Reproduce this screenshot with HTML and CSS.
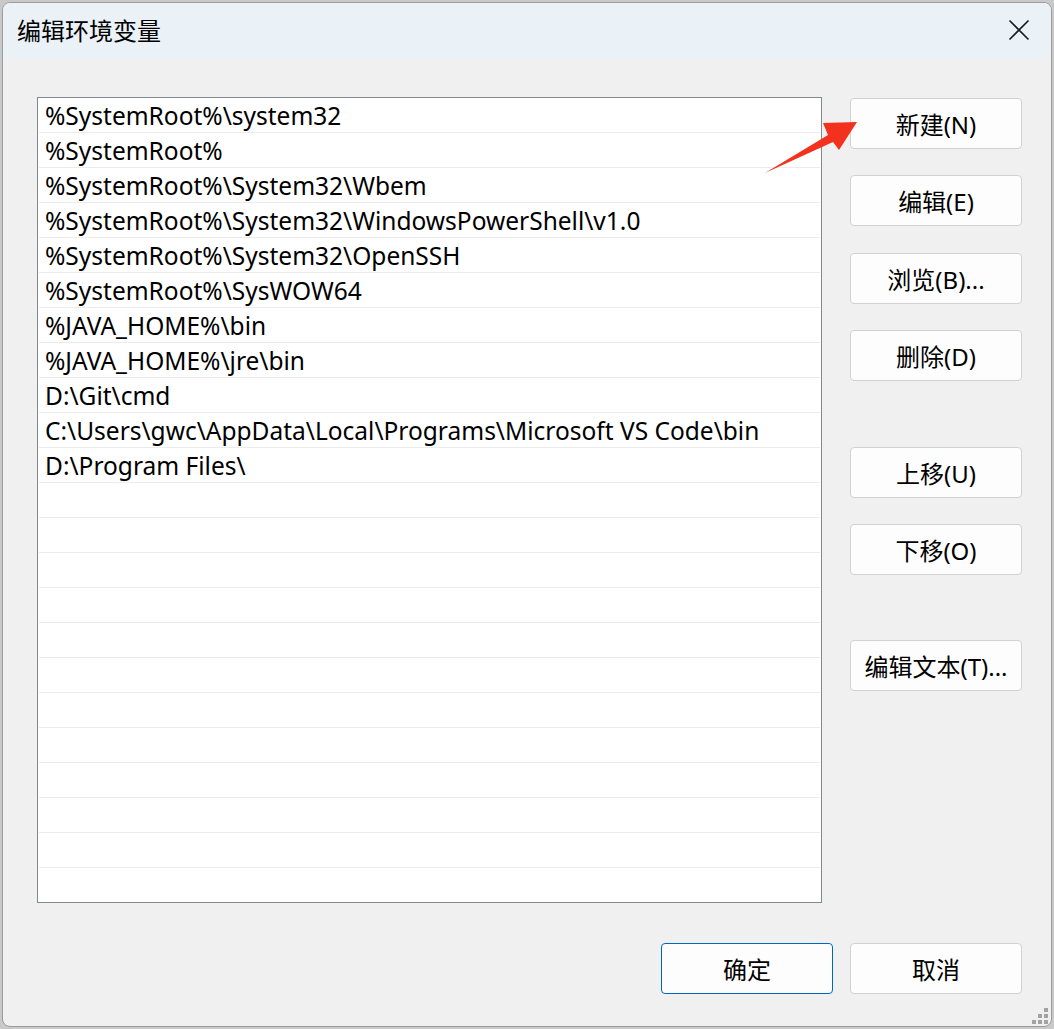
FILE: index.html
```html
<!DOCTYPE html>
<html lang="zh-CN">
<head>
<meta charset="utf-8">
<title>编辑环境变量</title>
<link rel="stylesheet" href="styles.css">
</head>
<body>
<div class="window">
  <div class="titlebar">
    <span class="title">编辑环境变量</span>
    <span class="close">
      <svg width="22" height="22" viewBox="0 0 22 22"><path d="M1.5 1.5 L20.5 20.5 M20.5 1.5 L1.5 20.5" stroke="#1a1a1a" stroke-width="1.6" fill="none"/></svg>
    </span>
  </div>
  <div class="content">
    <div class="main">
      <div class="list">
        <div class="row">%SystemRoot%\system32</div>
        <div class="row">%SystemRoot%</div>
        <div class="row">%SystemRoot%\System32\Wbem</div>
        <div class="row">%SystemRoot%\System32\WindowsPowerShell\v1.0</div>
        <div class="row">%SystemRoot%\System32\OpenSSH</div>
        <div class="row">%SystemRoot%\SysWOW64</div>
        <div class="row">%JAVA_HOME%\bin</div>
        <div class="row">%JAVA_HOME%\jre\bin</div>
        <div class="row">D:\Git\cmd</div>
        <div class="row">C:\Users\gwc\AppData\Local\Programs\Microsoft VS Code\bin</div>
        <div class="row">D:\Program Files\</div>
        <div class="row"></div>
        <div class="row"></div>
        <div class="row"></div>
        <div class="row"></div>
        <div class="row"></div>
        <div class="row"></div>
        <div class="row"></div>
        <div class="row"></div>
        <div class="row"></div>
        <div class="row"></div>
        <div class="row"></div>
        <div class="row"></div>
      </div>
      <div class="side">
        <button class="btn b-new">新建(N)</button>
        <button class="btn b-edit">编辑(E)</button>
        <button class="btn b-browse">浏览(B)...</button>
        <button class="btn b-del">删除(D)</button>
        <button class="btn b-up">上移(U)</button>
        <button class="btn b-down">下移(O)</button>
        <button class="btn b-text">编辑文本(T)...</button>
      </div>
    </div>
    <div class="footer">
      <button class="btn primary">确定</button>
      <button class="btn">取消</button>
    </div>
  </div>
</div>
<svg class="overlay" width="1054" height="1029" viewBox="0 0 1054 1029">
  <polygon points="765,173 828,135 823,123 857,122 839,150 833,142" fill="#f2311f"/>
  <g fill="#a3a3a3">
    <rect x="1044" y="1008" width="4" height="4"/>
    <rect x="1038" y="1014" width="4" height="4"/>
    <rect x="1044" y="1014" width="4" height="4"/>
    <rect x="1032" y="1020" width="4" height="4"/>
    <rect x="1038" y="1020" width="4" height="4"/>
    <rect x="1044" y="1020" width="4" height="4"/>
  </g>
</svg>
</body>
</html>
```

FILE: styles.css
```css
html, body {
  margin: 0;
  padding: 0;
}
body {
  width: 1054px;
  height: 1029px;
  overflow: hidden;
  background: #c9c9c9;
  font-family: "Noto Sans", "Noto Sans CJK SC", sans-serif;
  color: #000;
}
.window {
  box-sizing: border-box;
  margin: 2px 0 0 2px;
  width: 1050px;
  height: 1025px;
  border: 1px solid #9c9c9c;
  border-radius: 8px;
  background: #f0f0f0;
  overflow: hidden;
  display: flex;
  flex-direction: column;
}
.titlebar {
  height: 55px;
  flex: none;
  background: #eaf1f7;
  display: flex;
  align-items: center;
  justify-content: space-between;
  padding-left: 14px;
}
.title {
  font-family: "Noto Sans CJK SC", sans-serif;
  font-size: 24px;
  line-height: 1;
  margin-top: -1px;
}
.close {
  width: 65px;
  height: 55px;
  display: flex;
  align-items: center;
  justify-content: center;
  margin-top: -2px;
}
.content {
  flex: 1;
  display: flex;
  flex-direction: column;
  padding: 39px 29px 0 34px;
}
.main {
  display: flex;
  align-items: flex-start;
}
.list {
  box-sizing: border-box;
  width: 785px;
  height: 806px;
  border: 1px solid #828790;
  background: #fff;
  padding: 0 1px;
  overflow: hidden;
  flex: none;
}
.row {
  box-sizing: border-box;
  height: 35px;
  border-bottom: 1px solid #ececec;
  padding-left: 6px;
  font-size: 24.5px;
  line-height: 36px;
  white-space: nowrap;
}
.side {
  display: flex;
  flex-direction: column;
  margin-left: 28px;
}
.btn {
  box-sizing: border-box;
  width: 172px;
  height: 51px;
  border: 1px solid #d1d1d1;
  border-radius: 4px;
  background: #fdfdfd;
  font-family: "Noto Sans", "Noto Sans CJK SC", sans-serif;
  font-size: 24px;
  color: #000;
  padding: 0;
  display: flex;
  align-items: center;
  justify-content: center;
}
.b-new { margin-top: 1px; }
.b-edit { margin-top: 26px; }
.b-browse { margin-top: 27px; }
.b-del { margin-top: 26px; }
.b-up { margin-top: 66px; }
.b-down { margin-top: 26px; }
.b-text { margin-top: 65px; }
.footer {
  display: flex;
  justify-content: flex-end;
  gap: 17px;
  margin-top: 40px;
}
.primary {
  border-color: #0067c0;
}
.overlay {
  position: absolute;
  left: 0;
  top: 0;
  pointer-events: none;
}
```
